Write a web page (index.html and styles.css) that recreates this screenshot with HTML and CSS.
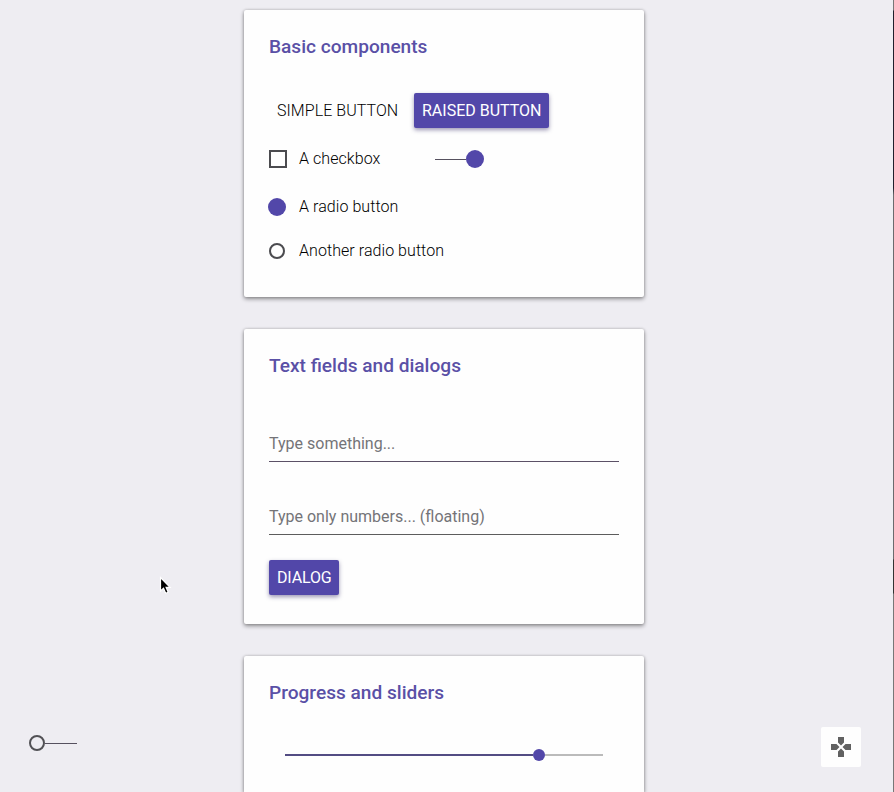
FILE: index.html
```html
<!DOCTYPE html>
<html lang="en">
<head>
<meta charset="utf-8">
<title>Components</title>
<link rel="stylesheet" href="styles.css">
</head>
<body>
<main class="cards">
  <section class="card basic">
    <h2>Basic components</h2>
    <div class="buttons">
      <button class="btn">SIMPLE BUTTON</button>
      <button class="btn raised">RAISED BUTTON</button>
    </div>
    <div class="option checks">
      <span class="checkbox"></span><span class="label">A checkbox</span>
      <span class="toggle on"><i class="line"></i><i class="knob"></i></span>
    </div>
    <div class="option first-radio"><span class="radio checked"></span><span class="label">A radio button</span></div>
    <div class="option"><span class="radio"></span><span class="label">Another radio button</span></div>
  </section>
  <section class="card fields">
    <h2>Text fields and dialogs</h2>
    <div class="field purple">Type something...</div>
    <div class="field">Type only numbers... (floating)</div>
    <button class="btn raised">DIALOG</button>
  </section>
  <section class="card progress">
    <h2>Progress and sliders</h2>
    <div class="slider"><i class="fill"></i><i class="thumb"></i><i class="rest"></i></div>
  </section>
</main>
<div class="toggle off"><i class="knob"></i><i class="line"></i></div>
<button class="pad" aria-label="Controls">
  <svg width="24" height="24" viewBox="0 0 24 24"><path fill="#616161" d="M15 7.500V2H9v5.500l3 3 3-3zM7.500 9H2v6h5.500l3-3-3-3zM9 16.500V22h6v-5.500l-3-3-3 3zM16.500 9l-3 3 3 3H22V9h-5.500z"/></svg>
</button>
<svg class="cursor" width="14" height="20" viewBox="0 0 14 20"><path d="M1.500 1.500V15l3-2.800 2.200 5.100 2.500-1.100-2.100-4.900h4z" fill="#000" stroke="#fff" stroke-width="1.200"/></svg>
<div class="edge"></div>
</body>
</html>
```
FILE: styles.css
```css
* { box-sizing: border-box; }
body {
  margin: 0;
  height: 792px;
  overflow: hidden;
  position: relative;
  background: #eeedf2;
  color: #000;
  font: 300 16px/20px Roboto, "Liberation Sans", sans-serif;
}
.cards {
  width: 400px;
  padding-top: 10px;
  margin-left: 244px;
  display: flex;
  flex-direction: column;
  gap: 32px;
}
.card {
  background: #fefefe;
  border-radius: 2px;
  padding: 24px 25px;
  box-shadow: 0 2px 4px rgba(0, 0, 0, .4), 0 0 3px rgba(0, 0, 0, .2);
}
.basic { height: 287px; }
.fields { height: 295px; }
.progress { height: 136px; border-radius: 2px 2px 0 0; }
h2 {
  margin: 0;
  padding-top: 1px;
  font-size: 19.1px;
  line-height: 24px;
  font-weight: 500;
  color: #5a50a6;
}
.buttons { display: flex; margin-top: 34px; }
.btn {
  height: 35px;
  padding: 0 8px;
  border: 0;
  border-radius: 2px;
  background: none;
  color: #000;
  font: inherit;
  white-space: nowrap;
}
.buttons .btn:first-child { width: 137px; margin-right: 8px; letter-spacing: .06px; }
.raised {
  background: #5247a9;
  color: #fff;
  font-weight: 400;
  box-shadow: 0 2px 4px rgba(60, 50, 110, .5);
}
.buttons .raised { width: 135px; }
.option { display: flex; align-items: center; height: 20px; margin-top: 24px; }
.checks { margin-top: 21px; }
.first-radio { margin-top: 28px; }
.checkbox { width: 18px; height: 18px; border: 2px solid #4b4b4f; margin-right: 12px; }
.radio { width: 16px; height: 16px; border: 2px solid #4b4b4f; border-radius: 50%; margin-right: 14px; }
.radio.checked { width: 18px; height: 18px; background: #5247a9; border: 0; margin: 0 13px 0 -1px; }
.label { letter-spacing: .06px; }
.toggle { display: flex; align-items: center; }
.line { height: 1px; background: #56515f; }
.on { margin-left: auto; margin-right: 135px; }
.on .line { width: 31px; }
.on .knob { width: 18px; height: 18px; border-radius: 50%; background: #5247a9; }
.off { position: absolute; left: 29px; top: 735px; }
.off .line { width: 32px; margin-top: 1px; }
.off .knob { width: 16px; height: 16px; border: 2px solid #515155; border-radius: 50%; }
.field {
  height: 29px;
  padding-top: 1px;
  margin-top: 44px;
  border-bottom: 1px solid #5c5c5c;
  color: #747478;
  font-weight: 400;
}
.fields h2 + .field { margin-top: 55px; }
.purple { border-color: #5b5066; }
.fields .btn { width: 70px; margin-top: 25px; letter-spacing: -.15px; }
.slider { display: flex; align-items: center; margin: 44px 16px 0; height: 12px; }
.fill { width: 248px; height: 2px; background: #534c83; }
.thumb { width: 12px; height: 12px; border-radius: 50%; background: #5247a9; }
.rest { flex: 1; height: 2px; background: #bbb; }
.pad {
  position: absolute;
  left: 821px;
  top: 727px;
  width: 40px;
  height: 40px;
  padding: 8px;
  border: 0;
  border-radius: 2px;
  background: #fefefe;
}
.pad svg { display: block; }
.cursor { position: absolute; left: 159px; top: 576px; }
.edge {
  position: absolute;
  right: 0;
  top: 0;
  width: 1px;
  height: 792px;
  background: linear-gradient(#777 0 10px, #20202c 11px 188px, #6b6b6e 195px 559px, #333 560px 593px, #777 594px);
}
```
